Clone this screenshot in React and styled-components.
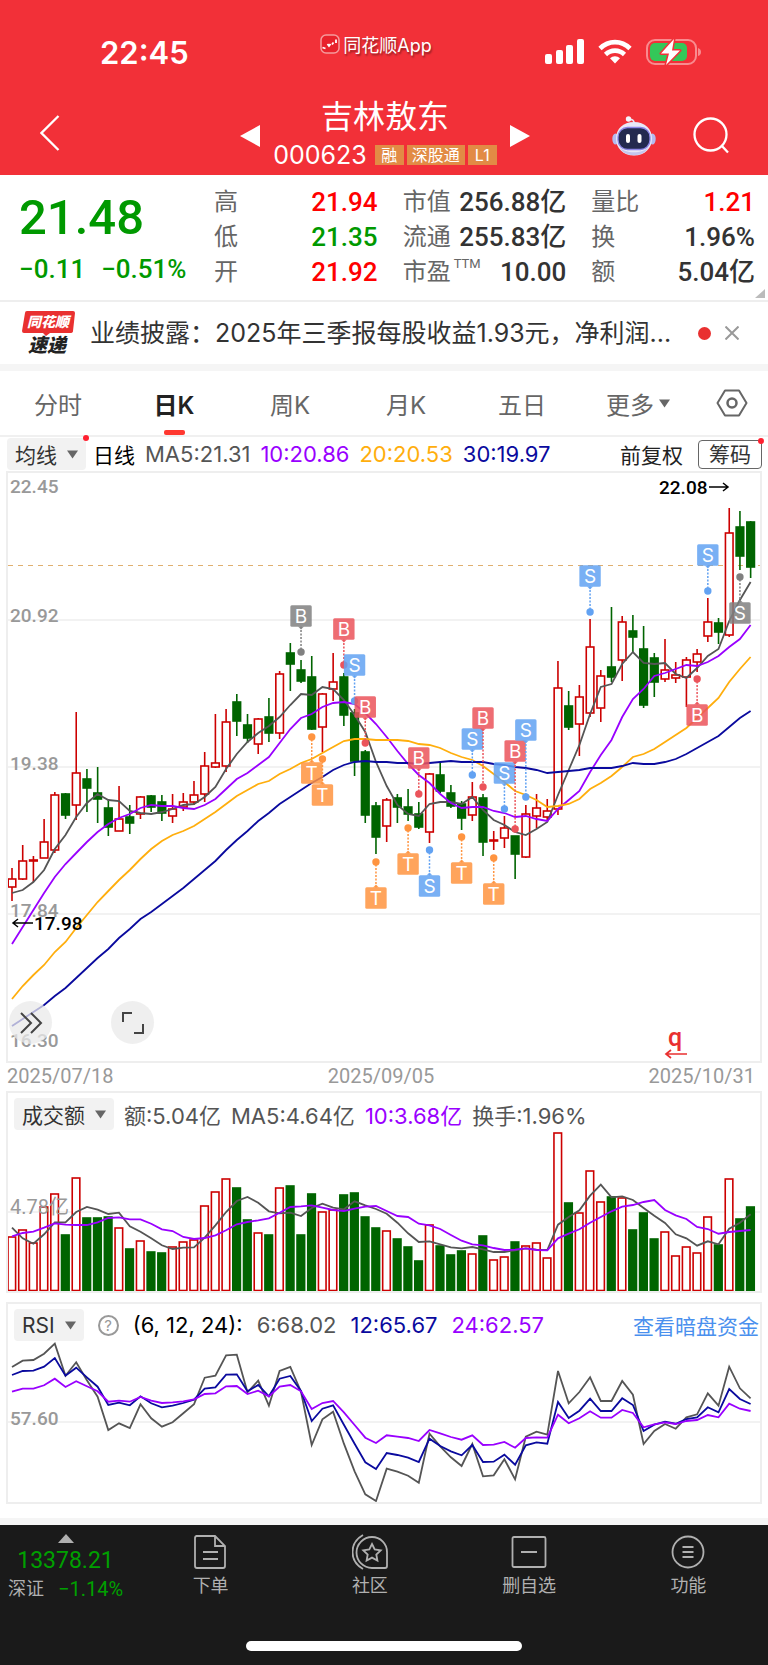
import React from 'react';
import styled, { createGlobalStyle } from 'styled-components';

const GlobalStyle = createGlobalStyle`
  * {
    box-sizing: border-box;
  }

  body {
    margin: 0;
    background: #fff;
    color: #333;
    font-family: Inter, "Noto Sans CJK SC", sans-serif;
    font-size: 21px;
  }

  button {
    border: none;
    padding: 0;
    background: none;
    color: inherit;
    font: inherit;
    cursor: pointer;
  }

  svg {
    display: block;
  }
`;

const RED = '#cc0000';
const GREEN = '#006400';
const PURPLE = '#9900ff';
const ORANGE = '#ffae0d';
const NAVY = '#0a0a9e';
const GRAY = '#555';

/* ---------- chart data ---------- */

// [up, high, body top, body bottom, low]
const candles = [
  [1, 868, 879, 887, 901], [1, 845, 861, 879, 880], [1, 856, 860, 861, 882], [1, 819, 842, 858, 858],
  [1, 792, 795, 850, 853], [0, 793, 794, 815, 819], [1, 712, 773, 805, 820], [0, 769, 779, 788, 812],
  [0, 767, 793, 799, 823], [0, 800, 808, 827, 836], [1, 786, 819, 831, 831], [0, 805, 817, 823, 834],
  [1, 796, 797, 814, 819], [0, 795, 796, 807, 812], [0, 795, 802, 813, 821], [1, 794, 809, 816, 823],
  [1, 793, 802, 807, 811], [1, 781, 795, 802, 805], [1, 752, 766, 794, 802], [1, 714, 763, 767, 768],
  [1, 709, 722, 766, 772], [0, 694, 702, 721, 736], [0, 714, 725, 738, 743], [1, 718, 719, 744, 754],
  [0, 698, 717, 733, 742], [1, 671, 674, 733, 739], [0, 643, 653, 664, 691], [0, 660, 670, 681, 683],
  [0, 656, 677, 729, 730], [1, 693, 694, 727, 752], [1, 653, 682, 689, 701], [0, 673, 677, 715, 726],
  [0, 709, 713, 761, 776], [0, 750, 752, 815, 823], [0, 802, 806, 837, 854], [1, 798, 800, 826, 842],
  [0, 794, 798, 807, 823], [0, 789, 807, 814, 821], [0, 802, 814, 827, 829], [1, 773, 774, 832, 843],
  [0, 762, 775, 791, 793], [0, 785, 793, 806, 808], [0, 801, 804, 818, 830], [1, 782, 797, 815, 821],
  [0, 794, 798, 842, 856], [1, 831, 840, 841, 850], [1, 816, 828, 838, 848], [0, 836, 836, 854, 879],
  [1, 805, 814, 857, 858], [1, 794, 808, 816, 828], [1, 799, 811, 817, 820], [1, 661, 688, 809, 815],
  [0, 691, 706, 727, 730], [1, 685, 697, 724, 756], [1, 619, 647, 713, 717], [1, 670, 676, 708, 722],
  [0, 607, 667, 677, 682], [1, 616, 622, 660, 681], [0, 615, 631, 637, 652], [0, 626, 649, 705, 708],
  [0, 653, 658, 682, 697], [1, 639, 670, 679, 682], [1, 662, 675, 678, 683], [1, 657, 660, 677, 707],
  [1, 649, 654, 662, 672], [1, 598, 622, 636, 642], [0, 618, 623, 632, 644], [1, 508, 533, 635, 637],
  [0, 511, 527, 556, 570], [0, 521, 522, 567, 578],
];

const ma5 = [
  893, 890, 882, 870, 849, 835, 817, 803, 794, 800, 801, 811, 813, 814, 812, 809, 805, 804, 797, 787, 769, 754,
  742, 733, 726, 717, 705, 694, 695, 687, 689, 700, 715, 732, 762, 786, 805, 814, 816, 804, 802, 802, 804, 797,
  810, 820, 825, 832, 835, 829, 822, 795, 770, 745, 714, 687, 684, 664, 652, 663, 664, 663, 674, 678, 668, 656,
  649, 621, 600, 582,
];
const ma10 = [
  944, 927, 910, 893, 877, 864, 853, 842, 832, 824, 818, 814, 808, 805, 806, 806, 808, 809, 805, 799, 789, 779,
  773, 765, 757, 743, 729, 718, 714, 707, 703, 702, 704, 713, 724, 737, 751, 764, 775, 783, 794, 803, 808, 807,
  807, 811, 813, 817, 816, 819, 821, 809, 800, 791, 772, 755, 740, 717, 699, 689, 676, 673, 669, 665, 666, 662,
  656, 647, 639, 625,
];
const ma20 = [
  999, 986, 975, 965, 952, 942, 928, 915, 902, 891, 880, 870, 859, 849, 841, 835, 831, 826, 819, 812, 804, 796,
  790, 784, 781, 774, 769, 763, 759, 753, 747, 741, 739, 739, 740, 740, 740, 741, 744, 745, 748, 753, 757, 760,
  766, 774, 782, 791, 795, 800, 807, 806, 804, 799, 789, 783, 776, 767, 757, 754, 749, 742, 735, 728, 718, 708,
  698, 682, 669, 657,
];
const ma30 = [
  1026, 1019, 1012, 1005, 996, 988, 978, 968, 958, 949, 938, 929, 919, 912, 904, 896, 888, 879, 870, 861, 850,
  840, 831, 821, 813, 804, 797, 790, 783, 777, 770, 765, 762, 761, 762, 762, 763, 763, 764, 763, 762, 761, 762,
  762, 762, 764, 765, 767, 768, 770, 773, 772, 771, 770, 768, 768, 768, 766, 763, 764, 764, 762, 759, 754, 748,
  742, 736, 727, 718, 711,
];

const markers = [
  { day: 28, text: 'T', tone: 'orange', label: 773, dot: 737 },
  { day: 29, text: 'T', tone: 'orange', label: 795, dot: 759 },
  { day: 27, text: 'B', tone: 'gray', label: 616, dot: 652 },
  { day: 31, text: 'B', tone: 'red', label: 629, dot: 665 },
  { day: 32, text: 'S', tone: 'blue', label: 665, dot: 701 },
  { day: 33, text: 'B', tone: 'red', label: 707, dot: 743 },
  { day: 34, text: 'T', tone: 'orange', label: 898, dot: 862 },
  { day: 37, text: 'T', tone: 'orange', label: 864, dot: 828 },
  { day: 38, text: 'B', tone: 'red', label: 758, dot: 794 },
  { day: 39, text: 'S', tone: 'blue', label: 886, dot: 850 },
  { day: 42, text: 'T', tone: 'orange', label: 873, dot: 837 },
  { day: 43, text: 'S', tone: 'blue', label: 739, dot: 775 },
  { day: 44, text: 'B', tone: 'red', label: 718, dot: 787 },
  { day: 45, text: 'T', tone: 'orange', label: 894, dot: 858 },
  { day: 46, text: 'S', tone: 'blue', label: 773, dot: 809 },
  { day: 47, text: 'B', tone: 'red', label: 751, dot: 829 },
  { day: 48, text: 'S', tone: 'blue', label: 730, dot: 797 },
  { day: 54, text: 'S', tone: 'blue', label: 576, dot: 612 },
  { day: 64, text: 'B', tone: 'red', label: 715, dot: 679 },
  { day: 65, text: 'S', tone: 'blue', label: 555, dot: 591 },
  { day: 68, text: 'S', tone: 'gray', label: 613, dot: 577 },
];
const tones = { gray: '#808080', red: '#eb545b', blue: '#62a2f2', orange: '#ff9440' };

const volumes = [
  1236, 1229, 1242, 1206, 1193, 1234, 1177, 1217, 1217, 1216, 1227, 1248, 1240, 1251, 1252, 1246, 1241, 1239,
  1205, 1191, 1178, 1187, 1219, 1232, 1234, 1187, 1185, 1234, 1193, 1211, 1209, 1194, 1192, 1216, 1227, 1230,
  1238, 1246, 1260, 1224, 1245, 1254, 1250, 1253, 1235, 1259, 1256, 1241, 1245, 1242, 1257, 1132, 1202, 1212,
  1170, 1201, 1196, 1197, 1229, 1212, 1238, 1231, 1255, 1246, 1252, 1216, 1244, 1178, 1218, 1206,
];

// Indicator lines are kept in thirds of a pixel below the panel origin
const volMa5 = [
  530, 562, 578, 550, 514, 514, 483, 468, 476, 489, 485, 526, 542, 562, 583, 594, 590, 589, 560, 523, 483, 450,
  438, 455, 481, 487, 485, 495, 471, 458, 470, 475, 451, 463, 474, 488, 515, 547, 573, 571, 580, 589, 592, 588,
  595, 603, 603, 598, 592, 596, 597, 521, 498, 478, 434, 401, 439, 436, 447, 471, 494, 516, 550, 562, 584, 571,
  580, 533, 515, 490,
];
const volMa10 = [
  556, 546, 542, 530, 517, 521, 522, 522, 514, 501, 499, 505, 505, 518, 535, 540, 558, 564, 561, 553, 538, 520,
  513, 508, 502, 485, 468, 466, 463, 470, 477, 480, 473, 467, 465, 480, 495, 498, 518, 523, 534, 552, 569, 580,
  583, 591, 597, 596, 592, 597, 598, 562, 548, 535, 515, 498, 481, 467, 462, 453, 447, 477, 493, 504, 528, 534,
  548, 543, 540, 537,
];
const rsi6 = [
  231, 212, 210, 191, 161, 257, 217, 271, 320, 420, 400, 414, 343, 385, 410, 397, 370, 343, 263, 257, 196, 194,
  307, 272, 347, 243, 231, 305, 465, 388, 365, 461, 544, 613, 633, 536, 545, 557, 578, 431, 469, 502, 528, 462,
  559, 556, 508, 568, 440, 425, 434, 243, 340, 306, 262, 333, 333, 273, 314, 462, 423, 402, 416, 382, 373, 310,
  347, 230, 295, 325,
];
const rsi12 = [
  255, 243, 242, 230, 204, 257, 233, 262, 290, 345, 338, 346, 319, 340, 352, 347, 339, 329, 296, 292, 254, 253,
  304, 285, 319, 266, 258, 303, 393, 356, 346, 404, 461, 517, 537, 489, 495, 503, 516, 446, 468, 484, 496, 465,
  516, 515, 494, 524, 466, 457, 461, 336, 384, 362, 326, 363, 363, 325, 345, 423, 404, 395, 401, 387, 382, 352,
  367, 297, 327, 342,
];
const rsi24 = [
  305, 296, 296, 286, 266, 291, 274, 289, 304, 335, 332, 335, 321, 332, 339, 337, 334, 328, 312, 310, 289, 288,
  312, 302, 319, 290, 285, 304, 357, 339, 333, 367, 405, 443, 459, 436, 440, 444, 453, 420, 430, 441, 449, 436,
  465, 464, 456, 473, 444, 442, 443, 374, 400, 385, 364, 383, 383, 360, 369, 412, 403, 397, 402, 393, 390, 375,
  382, 341, 356, 363,
];

const dayX = (i) => 12 + i * 10.705;
const toPoints = (values, origin = 0, scale = 1) =>
  values.map((v, i) => `${dayX(i).toFixed(1)},${(origin + v / scale).toFixed(1)}`).join(' ');

/* ---------- header ---------- */

const Header = styled.header`
  background: #f23038;
  color: #fff;
`;

const StatusBar = styled.div`
  display: grid;
  grid-template-columns: 1fr auto 1fr;
  height: 96px;
  padding: 0 67px;
`;

const Clock = styled.time`
  padding: 33px 0 0 33px;
  font-size: 31px;
  font-weight: 600;
  line-height: 40px;
`;

const ReturnApp = styled.a`
  display: flex;
  align-items: center;
  gap: 3px;
  height: 24px;
  margin-top: 32px;
  padding-right: 16px;
  color: #fff;
  font-size: 18px;
  text-decoration: none;
  text-shadow: 1px 2px 2px rgba(0, 0, 0, 0.4);
`;

const StatusIcons = styled.div`
  display: flex;
  justify-content: flex-end;
  gap: 14px;
  padding-top: 39px;
`;

const TitleBar = styled.div`
  display: grid;
  grid-template-columns: 1fr 290px 1fr;
  align-items: center;
  height: 79px;
  padding: 0 38px 0 40px;
`;

const Switcher = styled.div`
  display: flex;
  align-items: center;
  justify-content: space-between;
`;

const Stock = styled.div`
  display: flex;
  flex-direction: column;
  align-items: center;
  white-space: nowrap;
`;

const StockName = styled.h1`
  margin: 0;
  font-size: 32px;
  font-weight: 400;
  line-height: 39px;
`;

const StockMeta = styled.div`
  display: flex;
  align-items: center;
  gap: 3px;
  font-size: 25px;
  line-height: 38px;

  span {
    margin-right: 5px;
  }
`;

const Tag = styled.em`
  min-width: 29px;
  height: 20px;
  padding: 0 5px;
  background: #e28b45;
  font-size: 16px;
  font-style: normal;
  line-height: 20px;
  text-align: center;
`;

const HeaderActions = styled.div`
  display: flex;
  align-items: center;
  justify-content: flex-end;
  gap: 37px;
`;

/* ---------- quote ---------- */

const Quote = styled.section`
  position: relative;
  display: grid;
  grid-template-columns: 195px 1fr;
  height: 127px;
  padding: 10px 13px 0 19px;
  border-bottom: 2px solid #eee;
  font-family: Roboto, "Noto Sans CJK SC", sans-serif;
`;

const LastPrice = styled.div`
  color: #009900;
  font-size: 49px;
  font-weight: 500;
  line-height: 66px;
`;

const Change = styled.div`
  display: flex;
  gap: 16px;
  color: #009900;
  font-size: 26px;
  font-weight: 500;
  line-height: 36px;
`;

const Stats = styled.dl`
  display: grid;
  grid-template-columns: repeat(3, 1fr);
  grid-auto-rows: 35px;
  column-gap: 25px;
  margin: 0;
`;

const Stat = styled.div`
  display: flex;
  justify-content: space-between;
  line-height: 35px;
  white-space: nowrap;

  dt {
    color: #666;
    font-size: 24px;
  }

  dd {
    margin: 0;
    color: ${(props) => props.$color || '#333'};
    font-size: 26px;
    font-weight: 500;
  }

  sup {
    display: inline-block;
    margin-left: 3px;
    font-size: 13px;
    line-height: 13px;
    vertical-align: 12px;
  }
`;

const Corner = styled.i`
  position: absolute;
  right: 3px;
  bottom: 2px;
  border-left: 10px solid transparent;
  border-bottom: 9px solid #bbb;
`;

/* ---------- news ---------- */

const News = styled.section`
  display: flex;
  align-items: center;
  height: 62px;
  padding: 0 29px 0 22px;
`;

const NewsLink = styled.a`
  flex: 1;
  min-width: 0;
  margin: 0 24px 0 15px;
  overflow: hidden;
  color: #333;
  font-size: 25px;
  line-height: 36px;
  text-decoration: none;
  white-space: nowrap;
`;

const Dot = styled.i`
  width: 13px;
  height: 13px;
  margin-right: 14px;
  border-radius: 50%;
  background: #e93030;
`;

const Band = styled.div`
  height: 7px;
  background: #f5f5f5;
`;

/* ---------- tabs ---------- */

const Tabs = styled.nav`
  display: grid;
  grid-template-columns: repeat(6, 1fr) 72px;
  height: 66px;
  border-bottom: 2px solid #f0f0f0;
`;

const Tab = styled.button`
  position: relative;
  display: flex;
  align-items: center;
  justify-content: center;
  gap: 5px;
  color: ${(props) => (props.$active ? '#222' : '#666')};
  font-size: 24px;
  font-weight: ${(props) => (props.$active ? 600 : 400)};

  &::after {
    content: '';
    display: ${(props) => (props.$active ? 'block' : 'none')};
    position: absolute;
    bottom: 0;
    width: 21px;
    height: 5px;
    border-radius: 2px;
    background: #ff3830;
  }
`;

/* ---------- chart panels ---------- */

const Legend = styled.div`
  display: flex;
  align-items: center;
  gap: 7px;
  height: 34px;
  padding: 0 6px 0 7px;
  white-space: nowrap;
`;

const PanelLegend = styled(Legend)`
  gap: ${(props) => props.$gap || '10px'};
  height: 38px;
  padding: 4px 1px 0 6px;
`;

const Values = styled.div`
  display: flex;
  gap: ${(props) => props.$gap || '10px'};
  align-items: center;
`;

const Value = styled.span`
  color: ${(props) => props.$color || GRAY};
  font-size: ${(props) => (props.$small ? '21px' : '22px')};
`;

const Picker = styled.button`
  position: relative;
  display: flex;
  align-items: center;
  gap: 10px;
  height: 32px;
  padding: 0 8px;
  border-radius: 4px;
  background: #f2f2f2;
  color: #333;
  font-size: 21px;
`;

const RedDot = styled.i`
  position: absolute;
  top: -3px;
  right: -3px;
  width: 6px;
  height: 6px;
  border-radius: 3px;
  background: #ff2030;
`;

const Spacer = styled.span`
  flex: 1;
`;

const ChipButton = styled.button`
  position: relative;
  height: 29px;
  margin-left: 8px;
  padding: 0 10px;
  border: 1px solid #666;
  border-radius: 4px;
  font-size: 21px;
  line-height: 27px;
`;

const Panel = styled.section`
  position: relative;
  margin: ${(props) => props.$margin || '0 6px'};
  border: 2px solid #eee;
`;

const Plot = styled.svg`
  width: 100%;
  height: auto;
  font-family: Roboto, "Noto Sans CJK SC", sans-serif;
`;

const PlotButtons = styled.div`
  position: absolute;
  left: 1px;
  bottom: 17px;
  display: flex;
  gap: 59px;
`;

const RoundButton = styled.button`
  display: grid;
  place-items: center;
  width: 43px;
  height: 43px;
  border-radius: 50%;
  background: rgba(233, 233, 233, 0.75);
`;

const Dates = styled.div`
  display: flex;
  justify-content: space-between;
  height: 28px;
  padding: 0 13px 0 7px;
  color: #999;
  font-family: Roboto, sans-serif;
  font-size: 20px;
  line-height: 27px;
`;

const HelpMark = styled.button`
  width: 21px;
  height: 21px;
  border: 2px solid #999;
  border-radius: 50%;
  color: #999;
  font-size: 15px;
  line-height: 17px;
`;

const DarkPoolLink = styled.a`
  color: #4a90ee;
  text-decoration: none;
`;

/* ---------- bottom bar ---------- */

const BottomBar = styled.footer`
  padding-bottom: 14px;
  background: #1a1a1a;
  color: #b0b0b0;
`;

const BottomNav = styled.nav`
  display: grid;
  grid-template-columns: 131px repeat(4, 1fr);
  height: 116px;
`;

const NavItem = styled.button`
  display: flex;
  flex-direction: column;
  align-items: center;
  gap: 3px;
  height: 75px;
  padding-top: 9px;
  font-size: 18px;
  line-height: 26px;
`;

const IndexItem = styled.button`
  display: flex;
  flex-direction: column;
  align-items: center;
  height: 80px;
  padding-top: 9px;
  font-family: Roboto, "Noto Sans CJK SC", sans-serif;

  strong {
    color: #00a000;
    font-size: 23px;
    font-weight: 400;
    line-height: 36px;
  }

  div {
    display: flex;
    gap: 14px;
    font-size: 18px;
    line-height: 20px;
  }

  div span:last-child {
    color: #00a000;
    font-size: 20px;
  }
`;

const HomeIndicator = styled.div`
  width: 36%;
  height: 10px;
  margin: 0 auto;
  border-radius: 5px;
  background: #fff;
`;

/* ---------- small drawings ---------- */

const Caret = () => (
  <svg width="11" height="9" viewBox="0 0 11 9">
    <path d="M0 0.5h11L5.500 8.500z" fill="#666" />
  </svg>
);

const Triangle = ({ flip }) => (
  <svg width="20" height="22" viewBox="0 0 20 22">
    <path d={flip ? 'M0 0l20 11L0 22z' : 'M20 0L0 11l20 11z'} fill="#fff" />
  </svg>
);

const AppLogo = () => (
  <svg width="20" height="20" viewBox="0 0 20 20">
    <rect x="1" y="1" width="18" height="18" rx="5" fill="#e8222c" stroke="#f59a9c" strokeWidth="1.500" />
    <path d="M2.500 13.500l3 1M7.500 10l1.500 2 1.500-2M12 10.500l1.500-2M16 5.500v3.500" stroke="#fff" strokeWidth="1.800" fill="none" />
  </svg>
);

const Signal = () => (
  <svg width="39" height="25" viewBox="0 0 39 25" fill="#fff">
    <rect x="0" y="15" width="7" height="10" rx="2" />
    <rect x="11" y="11" width="7" height="14" rx="2" />
    <rect x="21" y="6" width="7" height="19" rx="2" />
    <rect x="32" y="0" width="7" height="25" rx="2" />
  </svg>
);

const Wifi = () => (
  <svg width="34" height="25" viewBox="0 0 34 25" fill="none" stroke="#fff" strokeWidth="4.600">
    <path d="M2 9.500C10.500 1 23.500 1 32 9.500" />
    <path d="M7.500 15.500c5.500-5.200 13.500-5.200 19 0" />
    <path d="M17 24.500l-5-5.200c2.800-2.700 7.200-2.700 10 0z" fill="#fff" stroke="none" />
  </svg>
);

const Battery = () => (
  <svg width="55" height="28" viewBox="0 0 55 28">
    <rect x="1" y="1" width="49" height="24" rx="8" fill="none" stroke="#f98b8f" strokeWidth="2" />
    <rect x="4" y="4" width="37" height="18" rx="5" fill="#34c759" />
    <path d="M52 9q3 1 3 4t-3 4z" fill="#f98b8f" />
    <path d="M28 0L15 14.500h8L20 26l14-14.500h-8z" fill="#fff" stroke="#f23038" strokeWidth="3" strokeLinejoin="round" />
    <path d="M28 0L15 14.500h8L20 26l14-14.500h-8z" fill="#fff" />
  </svg>
);

const Robot = () => (
  <svg width="44" height="40" viewBox="0 0 44 40">
    <path d="M22 7q0-4-5-3.500" fill="none" stroke="#e6e6f5" strokeWidth="1.800" />
    <circle cx="16.500" cy="3" r="2.700" fill="#f4f4fc" />
    <ellipse cx="3.500" cy="23" rx="3.200" ry="5.500" fill="#b4baf0" />
    <ellipse cx="40.500" cy="23" rx="3.200" ry="5.500" fill="#b4baf0" />
    <path d="M22 6c11 0 18 7 18 16.500S33 39.500 22 39.500 4 32 4 22.500 11 6 22 6z" fill="#e8e8f7" />
    <path d="M8 31c4 7 24 7 28 0-3 11-25 11-28 0z" fill="#c3c6ee" />
    <rect x="6" y="11.500" width="32" height="22" rx="9.500" fill="#232a4f" stroke="#8c86e6" strokeWidth="1.300" />
    <rect x="14" y="18" width="4" height="9" rx="2" fill="#fff" />
    <rect x="25.500" y="18" width="4" height="9" rx="2" fill="#fff" />
  </svg>
);

const SearchIcon = () => (
  <svg width="37" height="37" viewBox="0 0 37 37" fill="none" stroke="#fff" strokeWidth="2.300">
    <circle cx="17.500" cy="17.500" r="16" />
    <path d="M28.500 28.500l6.500 7" />
  </svg>
);

const NewsBadge = () => (
  <svg width="53" height="44" viewBox="0 0 53 44" overflow="visible" fontFamily='"Noto Sans CJK SC", sans-serif' fontStyle="italic" fontWeight="900">
    <path d="M5 0h46q2 0 2 2l-2 18q0 2-3 2H28l-4 3-3-3H2q-2 0-2-2L3 2q0-2 2-2z" fill="#e93030" />
    <text x="5" y="16" fontSize="14" fill="#fff">同花顺</text>
    <text x="6" y="41" fontSize="19" fill="#222">速递</text>
  </svg>
);

const HexIcon = () => (
  <svg width="32" height="28" viewBox="0 0 32 28" fill="none" stroke="#666" strokeWidth="2">
    <path d="M9 1.500h14L30.500 14 23 26.500H9L1.500 14z" strokeLinejoin="round" />
    <circle cx="16" cy="14" r="4.500" strokeWidth="2.500" />
  </svg>
);

/* ---------- charts ---------- */

const Line = ({ values, color, origin, scale }) => (
  <polyline points={toPoints(values, origin, scale)} fill="none" stroke={color} strokeWidth="1.800" />
);

const Marker = ({ day, text, tone, label, dot }) => {
  const x = dayX(day);
  const color = tones[tone];
  const side = label < dot ? 1 : -1;
  const edge = label + side * 10.500;
  return (
    <g>
      <line x1={x} y1={edge} x2={x} y2={dot} stroke={color} strokeWidth="1.500" strokeDasharray="2 1.500" />
      <circle cx={x} cy={dot} r="3.700" fill={color} />
      <g fillOpacity="0.85">
        <rect x={x - 10.700} y={label - 10.700} width="21.400" height="21.400" rx="1.500" fill={color} />
        <path d={`M${x - 3} ${edge}h6l-3 ${side * 3}z`} fill={color} />
      </g>
      <text x={x} y={label + 7} fontSize="19" textAnchor="middle" fill="#fff" fontFamily="Inter, sans-serif">
        {text}
      </text>
    </g>
  );
};

const CandleChart = () => (
  <Plot viewBox="8 473 752 588" role="img" aria-label="日K">
    <g stroke="#eee" strokeWidth="1.500">
      <line x1="8" x2="760" y1="620" y2="620" />
      <line x1="8" x2="760" y1="767" y2="767" />
      <line x1="8" x2="760" y1="914" y2="914" />
    </g>
    <g fontSize="19" fontWeight="500" fill="#999">
      <text x="10" y="493">22.45</text>
      <text x="10" y="622">20.92</text>
      <text x="10" y="770">19.38</text>
      <text x="10" y="917">17.84</text>
      <text x="10" y="1047">16.30</text>
    </g>
    <line x1="8" x2="760" y1="565.500" y2="565.500" stroke="#e0b070" strokeDasharray="5 5" />
    {candles.map(([up, high, top, bottom, low], i) => {
      const x = dayX(i);
      const color = up ? RED : GREEN;
      return (
        <g key={i} stroke={color} strokeWidth="1.600">
          <line x1={x} x2={x} y1={high} y2={top} />
          <line x1={x} x2={x} y1={bottom} y2={low} />
          <rect x={x - 3.800} y={top} width="7.600" height={bottom - top} fill={up ? '#fff' : color} />
        </g>
      );
    })}
    <Line values={ma5} color={GRAY} />
    <Line values={ma10} color={PURPLE} />
    <Line values={ma20} color={ORANGE} />
    <Line values={ma30} color={NAVY} />
    {markers.map((m) => (
      <Marker key={m.day} {...m} />
    ))}
    <g fontSize="19" fontWeight="500" fill="#000">
      <text x="34" y="930">17.98</text>
      <text x="659" y="494">22.08</text>
    </g>
    <g fill="none" stroke="#000" strokeWidth="1.500">
      <path d="M33 923H14M18 919l-5 4 5 4" />
      <path d="M709 487h19M723 483l5 4-5 4" />
    </g>
    <text x="668" y="1046" fontSize="25" fontWeight="500" fill="#e93030">q</text>
    <path d="M687 1054h-20M671 1050l-5 4 5 4" fill="none" stroke="#e93030" strokeWidth="1.700" />
  </Plot>
);

const VolumeChart = () => (
  <Plot viewBox="8 1130 752 160" role="img" aria-label="成交额">
    <line x1="8" x2="760" y1="1211" y2="1211" stroke="#eee" strokeWidth="1.500" />
    {volumes.map((top, i) => {
      const up = candles[i][0];
      return (
        <rect
          key={i}
          x={dayX(i) - 4}
          y={top}
          width="7.600"
          height={1289.500 - top}
          fill={up ? '#fff' : GREEN}
          stroke={up ? RED : GREEN}
          strokeWidth="1.600"
        />
      );
    })}
    <text x="10" y="1213" fontSize="20" fill="#999">4.78亿</text>
    <Line values={volMa5} color={GRAY} origin={1050} scale={3} />
    <Line values={volMa10} color={PURPLE} origin={1050} scale={3} />
  </Plot>
);

const RsiChart = () => (
  <Plot viewBox="8 1342 752 160" role="img" aria-label="RSI">
    <line x1="8" x2="760" y1="1422" y2="1422" stroke="#eee" strokeWidth="1.500" />
    <text x="10" y="1425" fontSize="19" fontWeight="500" fill="#999">57.60</text>
    <Line values={rsi6} color={GRAY} origin={1290} scale={3} />
    <Line values={rsi12} color={NAVY} origin={1290} scale={3} />
    <Line values={rsi24} color={PURPLE} origin={1290} scale={3} />
  </Plot>
);

/* ---------- page ---------- */

const stats = [
  { label: '高', value: '21.94', color: '#f00' },
  { label: '市值', value: '256.88亿' },
  { label: '量比', value: '1.21', color: '#f00' },
  { label: '低', value: '21.35', color: '#009900' },
  { label: '流通', value: '255.83亿' },
  { label: '换', value: '1.96%' },
  { label: '开', value: '21.92', color: '#f00' },
  { label: '市盈', note: 'TTM', value: '10.00' },
  { label: '额', value: '5.04亿' },
];

const navItems = [
  {
    label: '下单',
    icon: <path d="M3 2h19l10 10v20q0 2-2 2H4q-2 0-2-2V4q0-2 2-2M22 2v10h10M10 18h15M10 25h15" />,
  },
  {
    label: '社区',
    icon: (
      <>
        <path d="M20 3a15 15 0 0 0 0 31h13q2 0 2-2V18A15 15 0 0 0 20 3z" />
        <path d="M11 1C-3 9-3 27 11 35" />
        <path d="M20 10l2.700 5.500 6 .8-4.400 4.200 1.100 6-5.400-2.900-5.400 2.900 1.100-6-4.400-4.200 6-.8z" />
      </>
    ),
  },
  {
    label: '删自选',
    icon: <path d="M3 3h30q1.500 0 1.500 1.500v27q0 1.500-1.500 1.500H3q-1.500 0-1.500-1.500v-27Q1.500 3 3 3zM10 18h16" />,
  },
  {
    label: '功能',
    icon: (
      <>
        <circle cx="18" cy="18" r="15.500" />
        <path d="M12.500 13h11M12.500 18h11M12.500 23h11" />
      </>
    ),
  },
];

const App = () => {
  return (
    <>
      <GlobalStyle />
      <Header>
        <StatusBar>
          <Clock>22:45</Clock>
          <ReturnApp href="#app">
            <AppLogo />
            同花顺App
          </ReturnApp>
          <StatusIcons>
            <Signal />
            <Wifi />
            <Battery />
          </StatusIcons>
        </StatusBar>
        <TitleBar>
          <div>
            <button aria-label="返回">
              <svg width="22" height="36" viewBox="0 0 22 36" fill="none" stroke="#fff" strokeWidth="2.300">
                <path d="M18.500 1L1.500 18l17 17" />
              </svg>
            </button>
          </div>
          <Switcher>
            <button aria-label="上一只">
              <Triangle />
            </button>
            <Stock>
              <StockName>吉林敖东</StockName>
              <StockMeta>
                <span>000623</span>
                <Tag>融</Tag>
                <Tag>深股通</Tag>
                <Tag>L1</Tag>
              </StockMeta>
            </Stock>
            <button aria-label="下一只">
              <Triangle flip />
            </button>
          </Switcher>
          <HeaderActions>
            <button aria-label="助手">
              <Robot />
            </button>
            <button aria-label="搜索">
              <SearchIcon />
            </button>
          </HeaderActions>
        </TitleBar>
      </Header>

      <main>
        <Quote>
          <div>
            <LastPrice>21.48</LastPrice>
            <Change>
              <span>−0.11</span>
              <span>−0.51%</span>
            </Change>
          </div>
          <Stats>
            {stats.map((s) => (
              <Stat key={s.label} $color={s.color}>
                <dt>
                  {s.label}
                  {s.note && <sup>{s.note}</sup>}
                </dt>
                <dd>{s.value}</dd>
              </Stat>
            ))}
          </Stats>
          <Corner />
        </Quote>

        <News>
          <NewsBadge />
          <NewsLink href="#news">业绩披露：2025年三季报每股收益1.93元，净利润...</NewsLink>
          <Dot />
          <button aria-label="关闭">
            <svg width="14" height="14" viewBox="0 0 14 14" stroke="#999" strokeWidth="2">
              <path d="M0.500 0.500l13 13M13.500 0.500l-13 13" />
            </svg>
          </button>
        </News>
        <Band />

        <Tabs>
          <Tab>分时</Tab>
          <Tab $active>日K</Tab>
          <Tab>周K</Tab>
          <Tab>月K</Tab>
          <Tab>五日</Tab>
          <Tab>
            更多
            <Caret />
          </Tab>
          <Tab aria-label="设置">
            <HexIcon />
          </Tab>
        </Tabs>

        <Legend>
          <Picker>
            均线
            <Caret />
            <RedDot />
          </Picker>
          <Values>
            <Value $color="#000" $small>日线</Value>
            <Value>MA5:21.31</Value>
            <Value $color={PURPLE}>10:20.86</Value>
            <Value $color={ORANGE}>20:20.53</Value>
            <Value $color={NAVY}>30:19.97</Value>
          </Values>
          <Spacer />
          <Value $color="#222" $small>前复权</Value>
          <ChipButton>
            筹码
            <RedDot />
          </ChipButton>
        </Legend>

        <Panel>
          <CandleChart />
          <PlotButtons>
            <RoundButton aria-label="展开">
              <svg width="24" height="22" viewBox="0 0 24 22" fill="none" stroke="#444" strokeWidth="2">
                <path d="M2 1l10 10L2 21M12 1l10 10-10 10" />
              </svg>
            </RoundButton>
            <RoundButton aria-label="全屏">
              <svg width="22" height="22" viewBox="0 0 22 22" fill="none" stroke="#444" strokeWidth="2">
                <path d="M1 10V1h9M21 12v9h-9" />
              </svg>
            </RoundButton>
          </PlotButtons>
        </Panel>
        <Dates>
          <span>2025/07/18</span>
          <span>2025/09/05</span>
          <span>2025/10/31</span>
        </Dates>

        <Panel>
          <PanelLegend>
            <Picker>
              成交额
              <Caret />
            </Picker>
            <Values>
              <Value>额:5.04亿</Value>
              <Value>MA5:4.64亿</Value>
              <Value $color={PURPLE}>10:3.68亿</Value>
              <Value>换手:1.96%</Value>
            </Values>
          </PanelLegend>
          <VolumeChart />
        </Panel>

        <Panel $margin="9px 6px 14px">
          <PanelLegend $gap="14px">
            <Picker>
              RSI
              <Caret />
            </Picker>
            <HelpMark aria-label="说明">?</HelpMark>
            <Values $gap="14px">
              <Value $color="#000">(6, 12, 24):</Value>
              <Value>6:68.02</Value>
              <Value $color={NAVY}>12:65.67</Value>
              <Value $color={PURPLE}>24:62.57</Value>
            </Values>
            <Spacer />
            <DarkPoolLink href="#dark">查看暗盘资金</DarkPoolLink>
          </PanelLegend>
          <RsiChart />
        </Panel>
        <Band />
      </main>

      <BottomBar>
        <BottomNav>
          <IndexItem>
            <svg width="16" height="9" viewBox="0 0 16 9">
              <path d="M8 0l8 9H0z" fill="#b0b0b0" />
            </svg>
            <strong>13378.21</strong>
            <div>
              <span>深证</span>
              <span>−1.14%</span>
            </div>
          </IndexItem>
          {navItems.map((item) => (
            <NavItem key={item.label}>
              <svg width="36" height="36" viewBox="0 0 36 36" fill="none" stroke="#b0b0b0" strokeWidth="1.800">
                {item.icon}
              </svg>
              {item.label}
            </NavItem>
          ))}
        </BottomNav>
        <HomeIndicator />
      </BottomBar>
    </>
  );
};

export default App;
